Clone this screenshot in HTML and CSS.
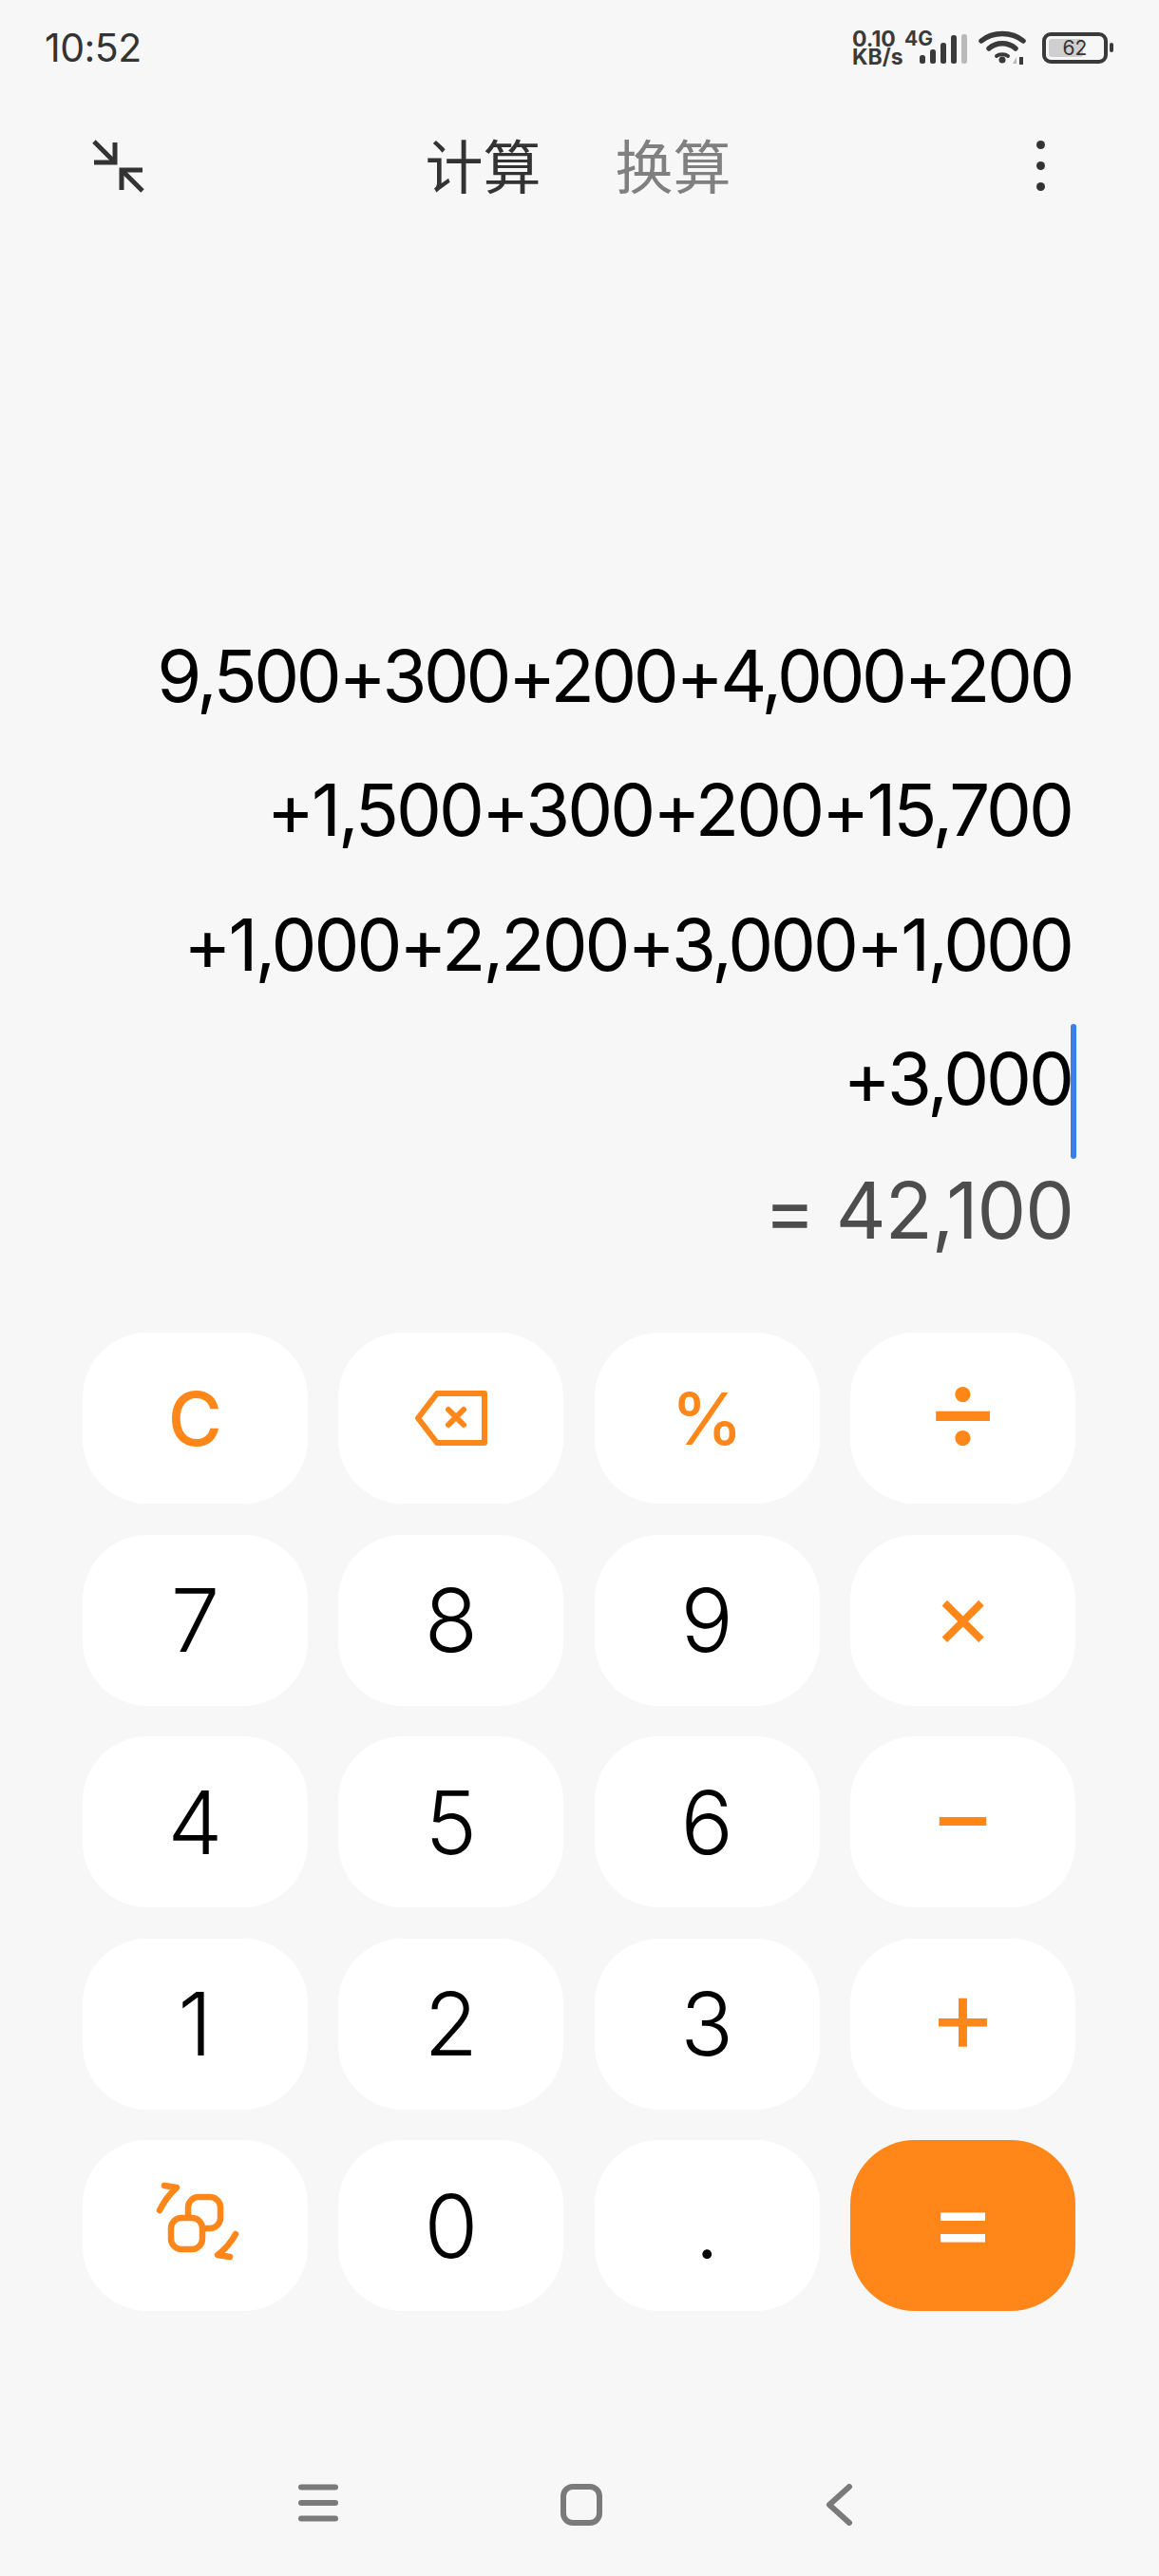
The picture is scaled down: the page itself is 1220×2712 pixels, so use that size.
FILE: index.html

```html
<!DOCTYPE html>
<html lang="zh-CN">
<head>
  <meta charset="UTF-8">
  <title>计算器</title>
  <link rel="stylesheet" href="styles.css">
</head>
<body>
  <div class="app">
    <div class="status-bar">
      <span class="time">10:52</span>
      <div class="status-icons">
        <div class="speed"><span>0.10</span><span>KB/s</span></div>
        <div class="signal">
          <span class="net-type">4G</span>
          <svg class="signal-bars" width="50" height="32" viewBox="0 0 50 32">
            <rect x="0" y="22" width="6" height="9" rx="2.5" fill="#3a3a3a"/>
            <rect x="11" y="16" width="6" height="15" rx="2.5" fill="#3a3a3a"/>
            <rect x="22" y="9" width="6" height="22" rx="2.5" fill="#3a3a3a"/>
            <rect x="33" y="1" width="6" height="30" rx="2.5" fill="#3a3a3a"/>
            <rect x="44" y="0" width="6" height="31" rx="2.5" fill="#b9b9b9"/>
          </svg>
        </div>
        <svg class="wifi" width="50" height="36" viewBox="0 0 50 36" fill="none" stroke="#3a3a3a" stroke-width="5.5" stroke-linecap="round">
          <path d="M3 11 C15 1 35 1 47 11"/>
          <path d="M11 19 C19 12 31 12 39 19"/>
          <path d="M19 27 C22 24.500 28 24.500 31 27" stroke-width="4"/>
          <circle cx="25" cy="31" r="3.500" fill="#3a3a3a" stroke="none"/>
          <path d="M36 35 L40 28 L40 35 Z" fill="#b9b9b9" stroke="none"/>
          <path d="M43 36 L43 28 L47 28 L47 36" fill="#3a3a3a" stroke="none"/>
        </svg>
        <div class="battery">
          <div class="battery-body">
            <div class="battery-fill"></div>
            <span class="battery-num">62</span>
          </div>
          <div class="battery-nub"></div>
        </div>
      </div>
    </div>

    <div class="top-bar">
      <svg class="shrink-icon" width="56" height="56" viewBox="0 0 56 56" fill="none" stroke="#333" stroke-width="5">
        <path d="M2 2 L24 24"/>
        <path d="M24 3 L24 24 L2 24"/>
        <path d="M53 54 L31 32"/>
        <path d="M31 53 L31 32 L53 32"/>
      </svg>
      <div class="tabs">
        <span class="tab tab-active">计算</span>
        <span class="tab">换算</span>
      </div>
      <div class="more"><i></i><i></i><i></i></div>
    </div>

    <div class="display">
      <div class="expr expr-first">9,500+300+200+4,000+200</div>
      <div class="expr">+1,500+300+200+15,700</div>
      <div class="expr">+1,000+2,200+3,000+1,000</div>
      <div class="expr"><span class="last">+3,000<i class="cursor"></i></span></div>
      <div class="result">= 42,100</div>
    </div>

    <div class="keypad">
      <div class="key op op-c">C</div>
      <div class="key">
        <svg width="76" height="58" viewBox="0 0 76 58" fill="none" stroke="#ff8719" stroke-width="6" stroke-linecap="round" stroke-linejoin="round">
          <path d="M3 29 L23 3 L73 3 L73 55 L23 55 Z"/>
          <path d="M35 20 L51 36 M51 20 L35 36"/>
        </svg>
      </div>
      <div class="key op op-pct">%</div>
      <div class="key op op-div">÷</div>

      <div class="key">7</div>
      <div class="key">8</div>
      <div class="key">9</div>
      <div class="key op op-mul">×</div>

      <div class="key">4</div>
      <div class="key">5</div>
      <div class="key">6</div>
      <div class="key op op-minus">−</div>

      <div class="key">1</div>
      <div class="key">2</div>
      <div class="key">3</div>
      <div class="key op op-plus">+</div>

      <div class="key">
        <svg width="100" height="100" viewBox="0 0 100 100" fill="none" stroke="#ff8719" stroke-width="6.500" stroke-linecap="round" stroke-linejoin="round">
          <rect x="43" y="20" width="34" height="33" rx="11"/>
          <rect x="25" y="42" width="33" height="33" rx="11" fill="#fff"/>
          <path d="M13 34 Q20 20 31 10 L18 8"/>
          <path d="M93 59 Q86 72 74 81 L87 83"/>
        </svg>
      </div>
      <div class="key">0</div>
      <div class="key">.</div>
      <div class="key key-equals">=</div>
    </div>

    <div class="nav-bar">
      <svg width="42" height="40" viewBox="0 0 42 40" fill="none" stroke="#7a7a7a" stroke-width="6" stroke-linecap="round">
        <path d="M3 3.500 H39 M3 20 H39 M3 36.500 H39"/>
      </svg>
      <svg width="44" height="44" viewBox="0 0 44 44" fill="none" stroke="#7a7a7a" stroke-width="6">
        <rect x="3" y="3" width="38" height="38" rx="10"/>
      </svg>
      <svg width="30" height="44" viewBox="0 0 30 44" fill="none" stroke="#7a7a7a" stroke-width="6" stroke-linecap="round" stroke-linejoin="round">
        <path d="M26 3 L5 22 L26 41"/>
      </svg>
    </div>
  </div>
</body>
</html>
```

FILE: styles.css

```css
* {
  box-sizing: border-box;
}
body {
  margin: 0;
  background-color: #f7f7f7;
  font-family: Inter, "Noto Sans CJK SC", sans-serif;
}
.app {
  width: 1220px;
  height: 2712px;
  display: flex;
  flex-direction: column;
  overflow: hidden;
}

/* status bar */
.status-bar {
  height: 100px;
  padding: 0 48px 0 47px;
  display: flex;
  justify-content: space-between;
  align-items: center;
}
.time {
  font-size: 41px;
  color: #333;
  letter-spacing: -0.500px;
}
.status-icons {
  display: flex;
  align-items: center;
}
.speed {
  display: flex;
  flex-direction: column;
  font-size: 23px;
  font-weight: 700;
  line-height: 19px;
  color: #3a3a3a;
  width: 55px;
  margin-top: 2px;
  margin-left: -5px;
}
.signal {
  position: relative;
  width: 65px;
  height: 36px;
}
.net-type {
  position: absolute;
  left: 0;
  top: -3px;
  font-size: 21px;
  font-weight: 700;
  line-height: 24px;
  color: #3a3a3a;
}
.signal-bars {
  position: absolute;
  left: 16px;
  top: 4px;
}
.wifi {
  margin-left: 13px;
}
.battery {
  display: flex;
  align-items: center;
  margin-left: 17px;
}
.battery-body {
  position: relative;
  width: 69px;
  height: 33px;
  border: 4px solid #3a3a3a;
  border-radius: 9px;
  padding: 3px;
}
.battery-fill {
  width: 36px;
  height: 100%;
  background-color: #cfcfcf;
  border-radius: 3px;
}
.battery-num {
  position: absolute;
  left: 0;
  right: 0;
  top: 0;
  text-align: center;
  font-size: 21px;
  line-height: 25px;
  color: #333;
}
.battery-nub {
  width: 4px;
  height: 10px;
  margin-left: 2px;
  background-color: #3a3a3a;
  border-radius: 2px;
}

/* top bar */
.top-bar {
  position: relative;
  height: 146px;
  display: flex;
  justify-content: center;
  align-items: center;
}
.shrink-icon {
  position: absolute;
  left: 97px;
  top: 47px;
}
.tabs {
  display: flex;
  gap: 78px;
  margin-left: -3px;
}
.tab {
  font-family: "Noto Sans CJK SC", sans-serif;
  font-size: 61px;
  line-height: 80px;
  color: #808080;
}
.tab-active {
  color: #333;
}
.more {
  position: absolute;
  left: 1091px;
  top: 48px;
  display: flex;
  flex-direction: column;
  gap: 13px;
}
.more i {
  display: block;
  width: 9px;
  height: 9px;
  border-radius: 50%;
  background-color: #333;
}

/* display */
.display {
  flex: 1;
  padding: 0 90px 61.500px 0;
  display: flex;
  flex-direction: column;
  justify-content: flex-end;
  text-align: right;
}
.expr {
  font-size: 76px;
  letter-spacing: -3px;
  line-height: 141.500px;
  color: #000;
  white-space: nowrap;
  padding-right: 2px;
}
.expr-first {
  letter-spacing: -3.400px;
}
.last {
  position: relative;
  display: inline-block;
}
.cursor {
  position: absolute;
  right: -5px;
  top: 13px;
  width: 6px;
  height: 142px;
  background-color: #3b7fe8;
  border-radius: 3px;
}
.result {
  font-size: 82px;
  letter-spacing: -1px;
  line-height: 135px;
  color: #4d4d4d;
  white-space: nowrap;
}

/* keys */
.keypad {
  padding: 0 88px 0 87px;
  display: grid;
  grid-template-columns: repeat(4, 1fr);
  grid-auto-rows: 180px;
  gap: 32.500px;
}
.key {
  display: flex;
  justify-content: center;
  align-items: center;
  background-color: #fff;
  border-radius: 68px;
  font-size: 92px;
  font-weight: 300;
  color: #000;
}
.op {
  color: #ff8719;
  font-weight: 400;
}
.op-c {
  font-size: 78px;
  font-weight: 500;
}
.op-pct {
  font-size: 76px;
  font-weight: 500;
}
.op-div {
  font-size: 124px;
  padding-bottom: 24px;
}
.op-mul {
  font-size: 96px;
  padding-bottom: 14px;
}
.op-minus,
.op-plus {
  font-size: 108px;
  padding-bottom: 20px;
}
.key-equals {
  background-color: #ff8719;
  color: #fff;
  font-size: 106px;
  font-weight: 400;
  padding-bottom: 14px;
}

/* navigation */
.nav-bar {
  height: 279px;
  padding: 182px 322px 0 314px;
  display: flex;
  justify-content: space-between;
  align-items: flex-start;
}
```
